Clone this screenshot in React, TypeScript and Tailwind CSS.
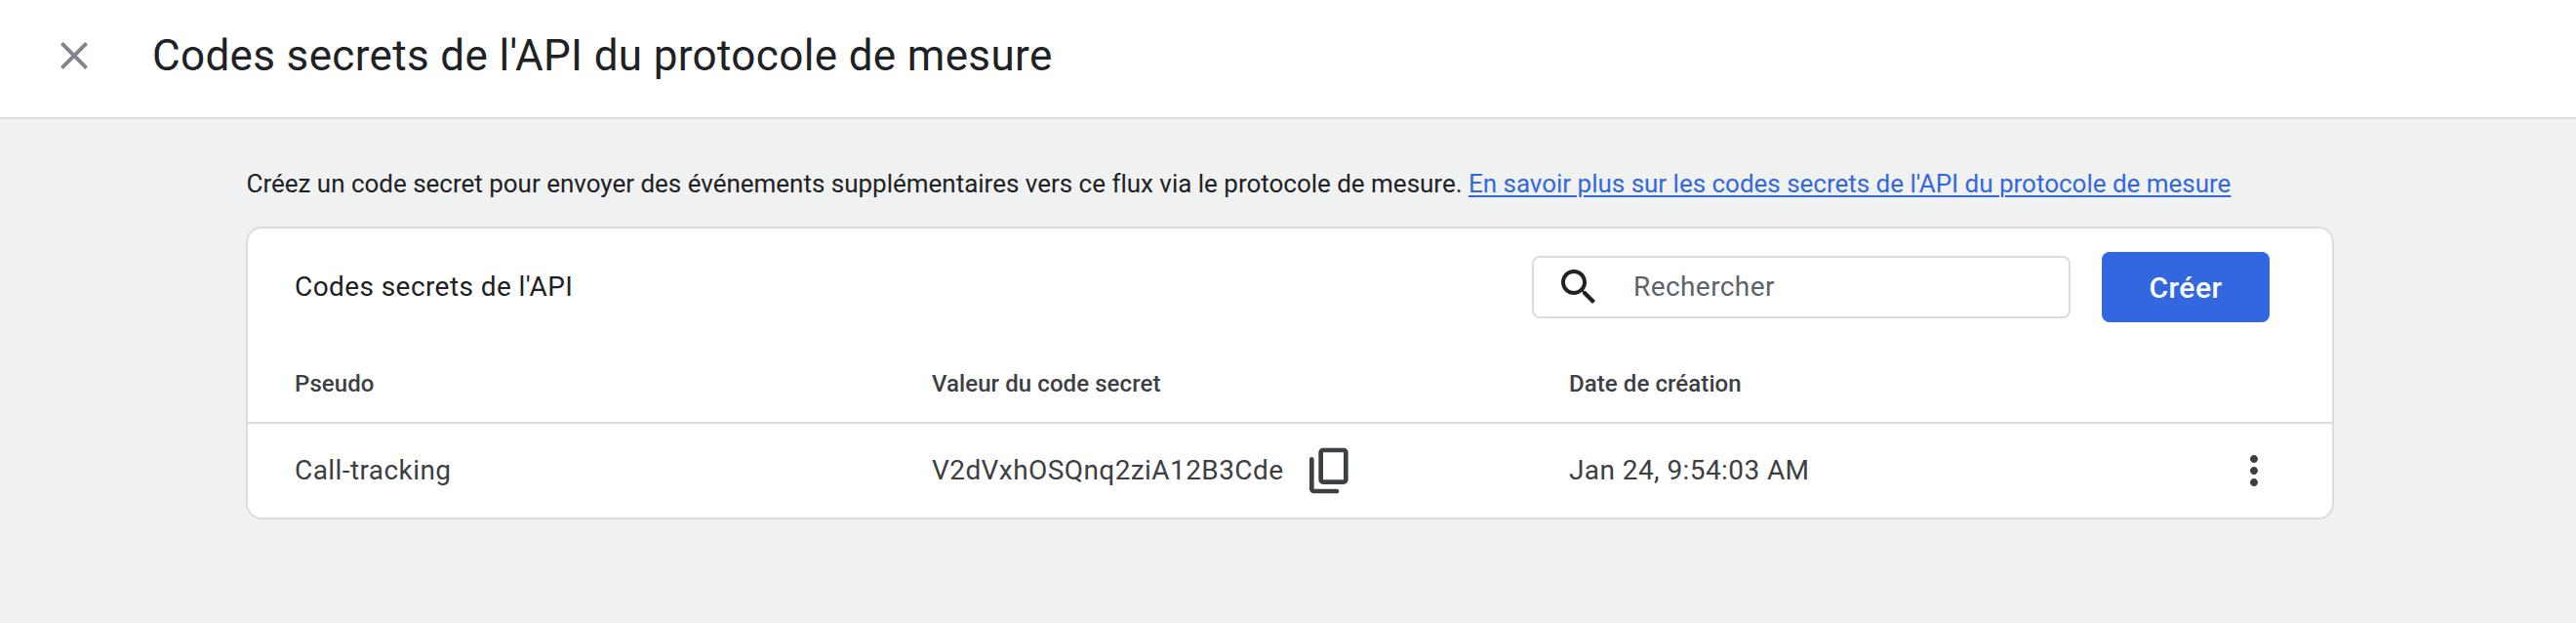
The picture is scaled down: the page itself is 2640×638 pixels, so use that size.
export default function App() {
  return (
    <div className="w-[2640px] h-[638px] overflow-hidden bg-[#f0f2f2] text-[#202124] font-['Roboto',sans-serif]">
      <header className="h-[122px] bg-white border-b-2 border-[#dadce0] flex items-center pb-[6px]">
        <button className="ml-[46px] w-[60px] h-[60px] flex items-center justify-center text-[#80868b]" aria-label="Fermer">
          <svg viewBox="0 0 24 24" className="w-[48px] h-[48px]" fill="currentColor">
            <path d="M19 6.41 17.59 5 12 10.59 6.41 5 5 6.41 10.59 12 5 17.59 6.41 19 12 13.41 17.59 19 19 17.59 13.41 12z" />
          </svg>
        </button>
        <h1 className="ml-[50px] text-[44px] tracking-[0.35px] font-normal leading-none">Codes secrets de l'API du protocole de mesure</h1>
      </header>
      <main className="pl-[252px] pr-[248px] pt-[46px]">
        <p className="text-[26px] tracking-[-0.015px] leading-[40px] h-[64px] pl-[0.5px]">
          Créez un code secret pour envoyer des événements supplémentaires vers ce flux via le protocole de mesure.{" "}
          <a className="text-[#3367e0] underline decoration-2 underline-offset-[3px]">En savoir plus sur les codes secrets de l'API du protocole de mesure</a>
        </p>
        <section className="bg-white border-2 border-[#dadce0] rounded-[16px] h-[300px] flex flex-col">
          <div className="h-[114px] shrink-0 pl-[48px] pr-[64px] flex items-center justify-between pt-[6px]">
            <h2 className="text-[28px] tracking-[0.42px] font-normal">Codes secrets de l'API</h2>
            <div className="flex items-center gap-[32px]">
              <div className="w-[552px] h-[64px] border-2 border-[#dadce0] rounded-[8px] flex items-center pl-[22px]">
                <svg viewBox="0 0 24 24" className="w-[48px] h-[48px] text-[#202124]" fill="currentColor">
                  <path d="M15.5 14h-.79l-.28-.27C15.41 12.59 16 11.11 16 9.5 16 5.91 13.09 3 9.5 3S3 5.91 3 9.5 5.91 16 9.5 16c1.61 0 3.09-.59 4.23-1.57l.27.28v.79l5 4.99L20.49 19l-4.99-5zm-6 0C7.01 14 5 11.99 5 9.5S7.01 5 9.5 5 14 7.01 14 9.5 11.99 14 9.5 14z" />
                </svg>
                <span className="ml-[32px] text-[28px] tracking-[0.42px] text-[#5f6368]">Rechercher</span>
              </div>
              <button className="w-[172px] h-[72px] rounded-[8px] bg-[#3367e0] text-white text-[30px] tracking-[0.45px] font-medium">Créer</button>
            </div>
          </div>
          <div className="h-[86px] shrink-0 border-b-2 border-[#dadce0] grid grid-cols-[653px_653px_1fr] items-center pl-[48px] pt-[5px] text-[24px] tracking-[0.08px] font-medium text-[#3c4043]">
            <div>Pseudo</div>
            <div>Valeur du code secret</div>
            <div>Date de création</div>
          </div>
          <div className="flex-1 grid grid-cols-[653px_653px_1fr] items-center pl-[48px] text-[28px] tracking-[0.42px] text-[#3c4043]">
            <div>Call-tracking</div>
            <div className="flex items-center">
              <span>V2dVxhOSQnq2ziA12B3Cde</span>
              <svg viewBox="0 0 24 24" className="ml-[20px] w-[56px] h-[56px]" fill="currentColor">
                <path d="M15 20H5V7c0-.55-.45-1-1-1s-1 .45-1 1v13c0 1.1.9 2 2 2h10c.55 0 1-.45 1-1s-.45-1-1-1zm5-4V4c0-1.1-.9-2-2-2H9c-1.1 0-2 .9-2 2v12c0 1.1.9 2 2 2h9c1.1 0 2-.9 2-2zm-2 0H9V4h9v12z" />
              </svg>
            </div>
            <div className="flex items-center justify-between pr-[56px]">
              <span>Jan 24, 9:54:03 AM</span>
              <svg viewBox="0 0 24 24" className="w-[48px] h-[48px]" fill="currentColor">
                <path d="M12 8c1.1 0 2-.9 2-2s-.9-2-2-2-2 .9-2 2 .9 2 2 2zm0 2c-1.1 0-2 .9-2 2s.9 2 2 2 2-.9 2-2-.9-2-2-2zm0 6c-1.1 0-2 .9-2 2s.9 2 2 2 2-.9 2-2-.9-2-2-2z" />
              </svg>
            </div>
          </div>
        </section>
      </main>
    </div>
  );
}
